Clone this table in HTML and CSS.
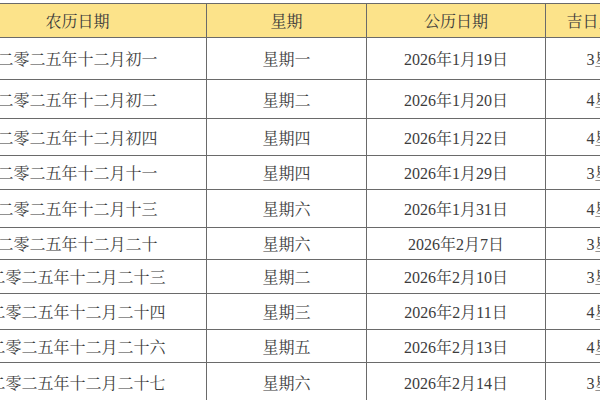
FILE: index.html
```html
<!DOCTYPE html>
<html lang="zh">
<head>
<meta charset="utf-8">
<title>吉日表</title>
<link rel="stylesheet" href="styles.css">
</head>
<body>
<table class="days">
  <colgroup>
    <col class="c-lunar"><col class="c-week"><col class="c-solar"><col class="c-star">
  </colgroup>
  <thead>
    <tr><th>农历日期</th><th>星期</th><th>公历日期</th><th>吉日星级</th></tr>
  </thead>
  <tbody>
    <tr><td>二零二五年十二月初一</td><td>星期一</td><td>2026年1月19日</td><td>3星</td></tr>
    <tr><td>二零二五年十二月初二</td><td>星期二</td><td>2026年1月20日</td><td>4星</td></tr>
    <tr><td>二零二五年十二月初四</td><td>星期四</td><td>2026年1月22日</td><td>4星</td></tr>
    <tr><td>二零二五年十二月十一</td><td>星期四</td><td>2026年1月29日</td><td>3星</td></tr>
    <tr><td>二零二五年十二月十三</td><td>星期六</td><td>2026年1月31日</td><td>4星</td></tr>
    <tr><td>二零二五年十二月二十</td><td>星期六</td><td>2026年2月7日</td><td>3星</td></tr>
    <tr><td>二零二五年十二月二十三</td><td>星期二</td><td>2026年2月10日</td><td>3星</td></tr>
    <tr><td>二零二五年十二月二十四</td><td>星期三</td><td>2026年2月11日</td><td>4星</td></tr>
    <tr><td>二零二五年十二月二十六</td><td>星期五</td><td>2026年2月13日</td><td>4星</td></tr>
    <tr><td>二零二五年十二月二十七</td><td>星期六</td><td>2026年2月14日</td><td>3星</td></tr>
  </tbody>
</table>
</body>
</html>
```
FILE: styles.css
```css
html, body {
  margin: 0;
  padding: 0;
  background: #ffffff;
  overflow: hidden;
  width: 600px;
  height: 400px;
}
body {
  font-family: "Liberation Serif", "Noto Serif CJK SC", "Noto Sans CJK SC", serif;
  font-size: 16px;
  color: #3c3c3c;
}
.days {
  border-collapse: collapse;
  table-layout: fixed;
  width: 703px;
  margin-top: 3px;
  margin-left: -52px;
}
.c-lunar { width: 258px; }
.c-week { width: 160px; }
.c-solar { width: 179px; }
.c-star { width: 106px; }
.days th,
.days td {
  border: 1px solid #6a6a6a;
  text-align: center;
  vertical-align: middle;
  padding: 0;
  font-weight: normal;
  white-space: nowrap;
  overflow: hidden;
}
.days th {
  background: #fce38a;
  color: #3a3a3a;
  height: 33px;
}
.days tbody tr:nth-child(1) td { height: 41px; }
.days tbody tr:nth-child(2) td { height: 38px; }
.days tbody tr:nth-child(3) td { height: 36px; }
.days tbody tr:nth-child(4) td { height: 33px; }
.days tbody tr:nth-child(5) td { height: 37px; }
.days tbody tr:nth-child(6) td { height: 31px; }
.days tbody tr:nth-child(7) td { height: 33px; }
.days tbody tr:nth-child(8) td { height: 35px; }
.days tbody tr:nth-child(9) td { height: 32px; }
.days tbody tr:nth-child(10) td { height: 38px; }
```
